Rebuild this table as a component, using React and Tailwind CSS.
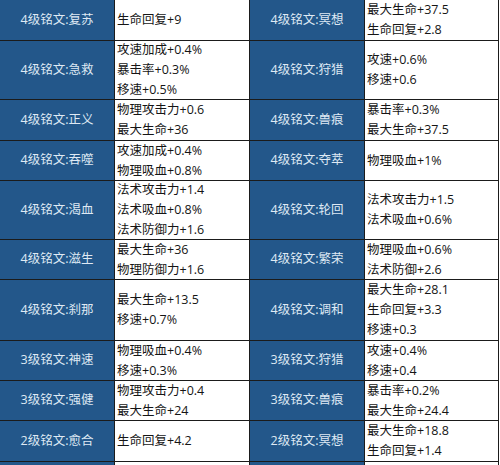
const rows = [
  { l: "4级铭文:复苏", lv: ["生命回复+9"], r: "4级铭文:冥想", rv: ["最大生命+37.5", "生命回复+2.8"], h: "h-[41px]" },
  { l: "4级铭文:急救", lv: ["攻速加成+0.4%", "暴击率+0.3%", "移速+0.5%"], r: "4级铭文:狩猎", rv: ["攻速+0.6%", "移速+0.6"], h: "h-[59px]" },
  { l: "4级铭文:正义", lv: ["物理攻击力+0.6", "最大生命+36"], r: "4级铭文:兽痕", rv: ["暴击率+0.3%", "最大生命+37.5"], h: "h-[41px]" },
  { l: "4级铭文:吞噬", lv: ["攻速加成+0.4%", "物理吸血+0.8%"], r: "4级铭文:夺萃", rv: ["物理吸血+1%"], h: "h-[40px]" },
  { l: "4级铭文:渴血", lv: ["法术攻击力+1.4", "法术吸血+0.8%", "法术防御力+1.6"], r: "4级铭文:轮回", rv: ["法术攻击力+1.5", "法术吸血+0.6%"], h: "h-[59px]" },
  { l: "4级铭文:滋生", lv: ["最大生命+36", "物理防御力+1.6"], r: "4级铭文:繁荣", rv: ["物理吸血+0.6%", "法术防御+2.6"], h: "h-[40px]" },
  { l: "4级铭文:刹那", lv: ["最大生命+13.5", "移速+0.7%"], r: "4级铭文:调和", rv: ["最大生命+28.1", "生命回复+3.3", "移速+0.3"], h: "h-[61px]" },
  { l: "3级铭文:神速", lv: ["物理吸血+0.4%", "移速+0.3%"], r: "3级铭文:狩猎", rv: ["攻速+0.4%", "移速+0.4"], h: "h-[40px]" },
  { l: "3级铭文:强健", lv: ["物理攻击力+0.4", "最大生命+24"], r: "3级铭文:兽痕", rv: ["暴击率+0.2%", "最大生命+24.4"], h: "h-[40px]" },
  { l: "2级铭文:愈合", lv: ["生命回复+4.2"], r: "2级铭文:冥想", rv: ["最大生命+18.8", "生命回复+1.4"], h: "h-[41px]" },
  { l: "", lv: [], r: "", rv: [], h: "h-[40px]" },
];

const Label = ({ text, h }) => (
  <div className={`${h} flex items-center justify-center bg-[#23578a] text-[#dfe9f4] border-r border-b border-[#1b1b1b]`}>
    {text}
  </div>
);

const Values = ({ lines, h }) => (
  <div className={`${h} flex flex-col justify-center pl-[2px] bg-white text-[#151515] border-r border-b border-[#1b1b1b]`}>
    {lines.map((t) => (
      <p key={t} className="leading-[20px]">{t}</p>
    ))}
  </div>
);

export default function App() {
  return (
    <div className="w-[500px] h-[465px] overflow-hidden bg-white">
      <div
        className="grid grid-cols-[115px_135px_115px_134px] text-[12.5px]"
        style={{ fontFamily: '"Open Sans", "Noto Sans CJK SC", sans-serif' }}
      >
        {rows.map((row, i) => (
          <div key={i} className="contents">
            <Label text={row.l} h={row.h} />
            <Values lines={row.lv} h={row.h} />
            <Label text={row.r} h={row.h} />
            <Values lines={row.rv} h={row.h} />
          </div>
        ))}
      </div>
    </div>
  );
}
